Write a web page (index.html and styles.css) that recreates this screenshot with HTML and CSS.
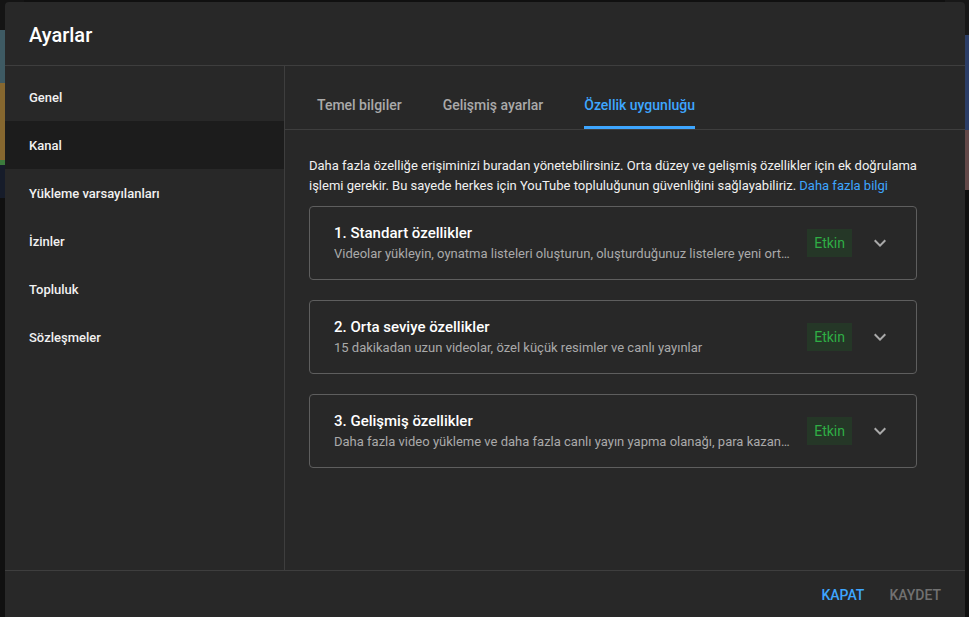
FILE: index.html
```html
<!DOCTYPE html>
<html lang="tr">
<head>
<meta charset="utf-8">
<title>Ayarlar</title>
<link rel="stylesheet" href="styles.css">
</head>
<body>
<div class="backdrop">
  <div class="bd-col bd-left">
    <div class="bd-block bd-dark1"></div>
    <div class="bd-block bd-teal"></div>
    <div class="bd-block bd-gold"></div>
    <div class="bd-block bd-green"></div>
    <div class="bd-block bd-navy"></div>
  </div>
  <div class="bd-col bd-right">
    <div class="bd-block bd-dark2"></div>
    <div class="bd-block bd-blue"></div>
    <div class="bd-block bd-rose"></div>
  </div>
</div>

<div class="dialog">
  <header class="dlg-head">
    <h1 class="dlg-title">Ayarlar</h1>
  </header>

  <div class="dlg-body">
    <nav class="side">
      <div class="side-item">Genel</div>
      <div class="side-item is-selected">Kanal</div>
      <div class="side-item">Yükleme varsayılanları</div>
      <div class="side-item">İzinler</div>
      <div class="side-item">Topluluk</div>
      <div class="side-item">Sözleşmeler</div>
    </nav>

    <section class="pane">
      <div class="tabs">
        <div class="tab">Temel bilgiler</div>
        <div class="tab">Gelişmiş ayarlar</div>
        <div class="tab is-active">Özellik uygunluğu</div>
      </div>

      <div class="content">
        <p class="desc">Daha fazla özelliğe erişiminizi buradan yönetebilirsiniz. Orta düzey ve gelişmiş özellikler için ek doğrulama işlemi gerekir. Bu sayede herkes için YouTube topluluğunun güvenliğini sağlayabiliriz. <a class="link" href="#">Daha fazla bilgi</a></p>

        <div class="cards">
          <div class="card">
            <div class="card-text">
              <div class="card-title">1. Standart özellikler</div>
              <div class="card-sub">Videolar yükleyin, oynatma listeleri oluşturun, oluşturduğunuz listelere yeni ortaklar ekleyin ve daha fazlasını yapın</div>
            </div>
            <span class="badge">Etkin</span>
            <svg class="chev" viewBox="0 0 24 24" width="24" height="24"><path d="M16.59 8.59L12 13.17 7.41 8.59 6 10l6 6 6-6z"/></svg>
          </div>

          <div class="card">
            <div class="card-text">
              <div class="card-title">2. Orta seviye özellikler</div>
              <div class="card-sub">15 dakikadan uzun videolar, özel küçük resimler ve canlı yayınlar</div>
            </div>
            <span class="badge">Etkin</span>
            <svg class="chev" viewBox="0 0 24 24" width="24" height="24"><path d="M16.59 8.59L12 13.17 7.41 8.59 6 10l6 6 6-6z"/></svg>
          </div>

          <div class="card">
            <div class="card-text">
              <div class="card-title">3. Gelişmiş özellikler</div>
              <div class="card-sub">Daha fazla video yükleme ve daha fazla canlı yayın yapma olanağı, para kazanma özellikleri ve daha fazlası</div>
            </div>
            <span class="badge">Etkin</span>
            <svg class="chev" viewBox="0 0 24 24" width="24" height="24"><path d="M16.59 8.59L12 13.17 7.41 8.59 6 10l6 6 6-6z"/></svg>
          </div>
        </div>
      </div>
    </section>
  </div>

  <footer class="dlg-foot">
    <button class="btn btn-primary">Kapat</button>
    <button class="btn btn-disabled">Kaydet</button>
  </footer>
</div>
</body>
</html>
```

FILE: styles.css
```css
* { box-sizing: border-box; }

html, body {
  margin: 0;
  padding: 0;
  width: 969px;
  height: 617px;
  overflow: hidden;
  background: #101010;
  font-family: Roboto, "Noto Sans", "Liberation Sans", sans-serif;
  color: #fff;
}

/* page behind the dialog */
.backdrop {
  display: flex;
  justify-content: space-between;
  height: 617px;
}
.bd-col {
  width: 24px;
  display: flex;
  flex-direction: column;
}
.bd-block { width: 100%; }
.bd-dark1 { height: 30px; background: #141414; }
.bd-teal  { height: 53px; background: #3e5a63; }
.bd-gold  { height: 77px; background: #86672f; }
.bd-green { height: 5px;  background: #3b7a3c; }
.bd-navy  { height: 33px; background: #161c2a; }
.bd-dark2 { height: 35px; background: #181818; }
.bd-blue  { height: 95px; background: #2c3e67; }
.bd-rose  { height: 60px; background: #624848; }

/* dialog */
.dialog {
  position: absolute;
  left: 5px;
  top: 2px;
  width: 960px;
  height: 617px;
  background: #282828;
  border-radius: 4px 4px 0 0;
  display: flex;
  flex-direction: column;
}

.dlg-head {
  height: 64px;
  padding: 3px 24px 0;
  display: flex;
  align-items: center;
  border-bottom: 1px solid #3e3e3e;
  flex: none;
}
.dlg-title {
  margin: 0;
  font-size: 20px;
  font-weight: 500;
  line-height: 24px;
  color: #fff;
}

.dlg-body {
  flex: 1;
  display: flex;
  min-height: 0;
}

/* left navigation */
.side {
  width: 280px;
  flex: none;
  border-right: 1px solid #3e3e3e;
  padding-top: 7px;
}
.side-item {
  height: 48px;
  display: flex;
  align-items: center;
  padding-left: 24px;
  font-size: 13px;
  font-weight: 500;
  color: #f1f1f1;
}
.side-item.is-selected { background: #1c1c1c; }

/* right pane */
.pane {
  flex: 1;
  min-width: 0;
  display: flex;
  flex-direction: column;
}
.tabs {
  display: flex;
  gap: 41px;
  padding: 15px 0 0 32px;
  border-bottom: 1px solid #3e3e3e;
  flex: none;
}
.tab {
  height: 48px;
  display: flex;
  align-items: center;
  padding-top: 3px;
  border-bottom: 3px solid transparent;
  font-size: 14px;
  font-weight: 500;
  color: #aaaaaa;
}
.tab.is-active {
  color: #3ea6ff;
  border-bottom-color: #3ea6ff;
}

.content {
  padding: 26px 48px 0 24px;
}
.desc {
  margin: 0;
  font-size: 13px;
  line-height: 20px;
  color: #f1f1f1;
}
.link {
  color: #3ea6ff;
  text-decoration: none;
}

.cards {
  margin-top: 10px;
  display: flex;
  flex-direction: column;
  gap: 20px;
}
.card {
  height: 74px;
  border: 1px solid #5e5e5e;
  border-radius: 4px;
  padding: 0 24px;
  display: flex;
  align-items: center;
}
.card-text {
  flex: 1;
  min-width: 0;
  margin-right: 12px;
  overflow: hidden;
}
.card-title {
  font-size: 15px;
  font-weight: 500;
  line-height: 22px;
  color: #fff;
}
.card-sub {
  font-size: 13px;
  line-height: 20px;
  color: #aaaaaa;
  white-space: nowrap;
  overflow: hidden;
  text-overflow: ellipsis;
}
.badge {
  flex: none;
  height: 28px;
  line-height: 28px;
  padding: 0 7px;
  background: #253727;
  color: #2fae45;
  font-size: 14px;
}
.chev {
  flex: none;
  margin-left: 16px;
  fill: #aaaaaa;
}

/* footer */
.dlg-foot {
  flex: none;
  height: 49px;
  border-top: 1px solid #3e3e3e;
  display: flex;
  justify-content: flex-end;
  align-items: center;
  gap: 1px;
  padding: 0 12px 0 0;
}
.btn {
  height: 36px;
  padding: 0 12px;
  background: none;
  border: none;
  font-family: Roboto, "Noto Sans", "Liberation Sans", sans-serif;
  font-size: 14px;
  font-weight: 500;
  text-transform: uppercase;
  cursor: pointer;
}
.btn-primary { color: #3ea6ff; }
.btn-disabled { color: #717171; }
```
